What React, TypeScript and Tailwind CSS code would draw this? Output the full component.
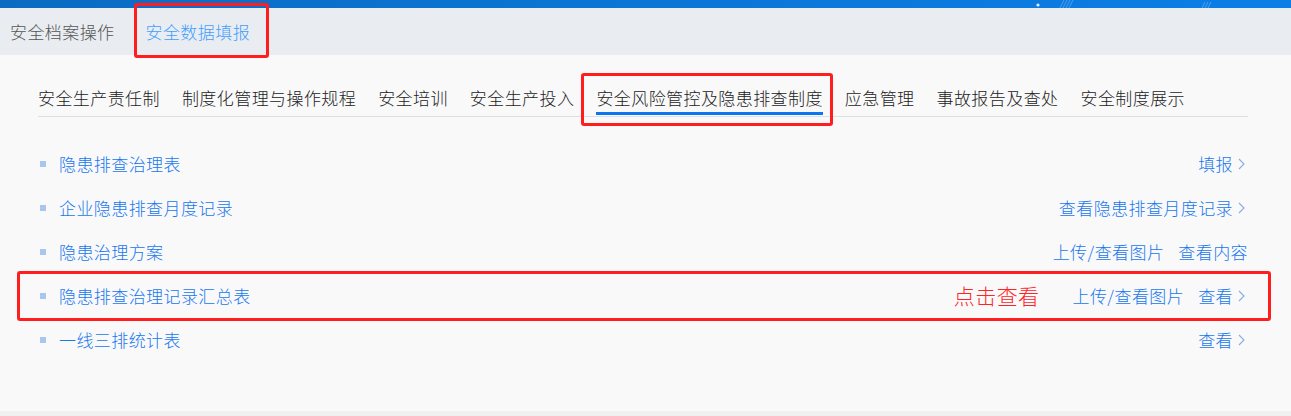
const subTabs = [
  '安全生产责任制',
  '制度化管理与操作规程',
  '安全培训',
  '安全生产投入',
  '安全风险管控及隐患排查制度',
  '应急管理',
  '事故报告及查处',
  '安全制度展示',
];

const activeTab = '安全风险管控及隐患排查制度';

type Action = { label: string; arrow?: boolean };

const rows: { title: string; note?: string; highlight?: boolean; actions: Action[] }[] = [
  { title: '隐患排查治理表', actions: [{ label: '填报', arrow: true }] },
  { title: '企业隐患排查月度记录', actions: [{ label: '查看隐患排查月度记录', arrow: true }] },
  { title: '隐患治理方案', actions: [{ label: '上传/查看图片' }, { label: '查看内容' }] },
  {
    title: '隐患排查治理记录汇总表',
    note: '点击查看',
    highlight: true,
    actions: [{ label: '上传/查看图片' }, { label: '查看', arrow: true }],
  },
  { title: '一线三排统计表', actions: [{ label: '查看', arrow: true }] },
];

const Chevron = () => (
  <svg width="7" height="12" viewBox="0 0 7 12" className="ml-[5px] shrink-0">
    <polyline points="1,1 6,6 1,11" fill="none" stroke="#86acE6" strokeWidth="1.1" />
  </svg>
);

export default function App() {
  return (
    <div className="flex min-h-screen flex-col bg-[#f9f9fa] font-['Noto_Sans_CJK_SC',sans-serif] text-[17px] font-light tracking-[0.42px]">
      {/* top banner strip */}
      <div className="relative h-2 overflow-hidden bg-gradient-to-r from-[#0b6bc2] via-[#0a76d6] to-[#0c7ee6]">
        <svg className="absolute left-[1030px] top-0" width="200" height="8" viewBox="0 0 200 8">
          <circle cx="8" cy="5" r="1.6" fill="#dcefff" />
          <g stroke="#5fa8f0" strokeWidth="0.8">
            <line x1="30" y1="8" x2="34" y2="0" />
            <line x1="33" y1="8" x2="37" y2="0" />
            <line x1="36" y1="8" x2="40" y2="0" />
            <line x1="39" y1="8" x2="43" y2="0" />
            <line x1="172" y1="8" x2="175" y2="2" />
            <line x1="175" y1="8" x2="178" y2="2" />
            <line x1="178" y1="8" x2="181" y2="2" />
          </g>
        </svg>
      </div>

      {/* first-level tabs */}
      <div className="flex h-[47px] items-center bg-[#e9edf1] pl-[10px]">
        <span className="text-[#555]">安全档案操作</span>
        <span className="relative ml-[31px] text-[#409eff]">
          安全数据填报
          <span className="absolute -left-[12px] -right-[19px] -top-[16px] -bottom-[14px] rounded-[3px] border-[3px] border-[#ff1d1d]" />
        </span>
      </div>

      <div className="flex-1 pl-[38px] pr-[43px]">
        {/* second-level tabs */}
        <div className="mt-[31px] flex gap-[22px] border-b border-[#dcdfe6]">
          {subTabs.map((t) => (
            <div key={t} className="relative pb-[6px] leading-6 text-[#222]">
              {t}
              {t === activeTab && (
                <>
                  <span className="absolute bottom-[1px] left-0 right-0 h-[3px] bg-[#0b76ee]" />
                  <span className="absolute -left-[15px] -right-[10px] -top-[13px] -bottom-[10px] rounded-[3px] border-[3px] border-[#ff1d1d]" />
                </>
              )}
            </div>
          ))}
        </div>

        {/* list */}
        <div className="mt-[25px]">
          {rows.map((r) => (
            <div key={r.title} className="relative flex h-[44px] items-center text-[#1877ee]">
              <span className="ml-[2px] mr-[13px] h-[6px] w-[6px] bg-[#a9c6ee]" />
              <span>{r.title}</span>
              <div className="ml-auto flex items-center">
                {r.note && <span className="mr-[33px] text-[21px] text-[#ff2424]">{r.note}</span>}
                {r.actions.map((a, i) => (
                  <span key={a.label} className={`flex items-center ${i > 0 ? 'ml-[14px]' : ''} ${a.arrow ? 'mr-[3px]' : ''}`}>
                    {a.label}
                    {a.arrow && <Chevron />}
                  </span>
                ))}
              </div>
              {r.highlight && (
                <span className="absolute -left-[21px] -right-[23px] -top-[3px] -bottom-[3px] rounded-[3px] border-[3px] border-[#ff1d1d]" />
              )}
            </div>
          ))}
        </div>
      </div>

      <div className="h-[5px] bg-[#f0f0f0]" />
    </div>
  );
}
